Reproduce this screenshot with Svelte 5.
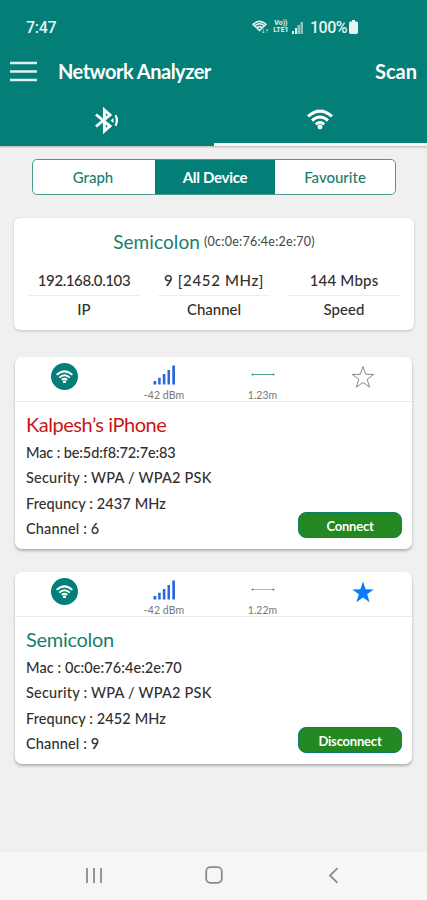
<script>
  const stats = [
    { value: '192.168.0.103', label: 'IP', spacing: -0.4 },
    { value: '9 [2452 MHz]', label: 'Channel', spacing: 0.65 },
    { value: '144 Mbps', label: 'Speed', spacing: 0.2 }
  ];

  const devices = [
    {
      name: 'Kalpesh\u2019s iPhone', connected: false, distance: '1.23m', action: 'Connect',
      rows: [
        { text: 'Mac : be:5d:f8:72:7e:83', spacing: -0.12 },
        { text: 'Security : WPA / WPA2 PSK', spacing: 0.21 },
        { text: 'Frequncy : 2437 MHz', spacing: 0.1 },
        { text: 'Channel : 6', spacing: 0.15 }
      ]
    },
    {
      name: 'Semicolon', connected: true, distance: '1.22m', action: 'Disconnect',
      rows: [
        { text: 'Mac : 0c:0e:76:4e:2e:70', spacing: 0.08 },
        { text: 'Security : WPA / WPA2 PSK', spacing: 0.21 },
        { text: 'Frequncy : 2452 MHz', spacing: 0.1 },
        { text: 'Channel : 9', spacing: 0.15 }
      ]
    }
  ];
</script>

{#snippet wifi(size)}
  <svg width={size} height={size * 0.8} viewBox="0 0 25 20" fill="none" stroke="currentColor" stroke-width="2.9">
    <path d="M1 7.2Q12.5-3.2 24 7.2M4.8 11.2Q12.5 4.2 20.2 11.2M8.5 14.7Q12.5 11.2 16.5 14.7" />
    <circle cx="12.5" cy="17.4" r="2.4" fill="currentColor" stroke="none" />
  </svg>
{/snippet}

<div class="screen">
  <header>
    <div class="status">
      <span class="clock">7:47</span>
      <div class="status-icons">
        <svg width="17" height="15" viewBox="0 0 17 15" fill="none" stroke="currentColor" stroke-width="1.5">
          <path d="M1 4.3Q7.5-1.5 14 4.3L7.5 10.5ZM3 5.6Q7.5 2 12 5.6M5.2 7.6Q7.5 5.6 9.8 7.6" />
          <path d="M11.5 9v4M10 11.5l1.5 1.5 1-1.2M15 13V9.2M14 10.5l1-1.3 1 1.3" stroke-width=".8" opacity=".6" />
        </svg>
        <div class="volte"><span>Vo))</span><span>LTE1</span></div>
        <svg width="12" height="13" viewBox="0 0 12 13" fill="currentColor">
          <path d="M0 10h2v3H0zM3 7h2v6H3z" />
          <path d="M5.5 4H8v9H5.5zM8.5 1H11v12H8.5z" opacity=".6" />
        </svg>
        <span class="percent">100%</span>
        <svg width="9" height="14" viewBox="0 0 9 14" fill="currentColor">
          <path d="M3 0h3v1.5h1.5Q9 1.5 9 3v9.2Q9 14 7.5 14h-6Q0 14 0 12.2V3Q0 1.5 1.5 1.5H3z" />
        </svg>
      </div>
    </div>
    <div class="bar">
      <svg width="27" height="21" viewBox="0 0 27 21" stroke="currentColor" stroke-width="2.3">
        <path d="M0 2h27M0 10.5h27M0 19h27" />
      </svg>
      <h1>Network Analyzer</h1>
      <span class="scan">Scan</span>
    </div>
    <div class="radios">
      <div class="radio">
        <svg width="24" height="27" viewBox="0 0 24 27" fill="none" stroke="currentColor" stroke-width="2.9">
          <path d="M1 7.5l14 11.6-5.6 4.9V3L15 7.9 1 19.5" />
          <path d="M15.5 13.5l3-2.4v4.8z" fill="currentColor" stroke="none" />
          <path d="M20.5 8.2q2.8 5.2 0 10.6" stroke-width="2.3" />
        </svg>
      </div>
      <div class="radio active">{@render wifi(26)}</div>
    </div>
  </header>

  <main>
    <div class="tabs">
      <span class="graph">Graph</span>
      <span class="selected">All Device</span>
      <span class="fav">Favourite</span>
    </div>

    <section class="summary">
      <div class="network"><span class="ssid">Semicolon</span><span class="mac">(0c:0e:76:4e:2e:70)</span></div>
      <div class="stats">
        {#each stats as stat}
          <div class="stat">
            <div class="value" style="letter-spacing: {stat.spacing}px">{stat.value}</div>
            <div class="label">{stat.label}</div>
          </div>
        {/each}
      </div>
    </section>

    {#each devices as device}
      <section class="device" class:connected={device.connected}>
        <div class="metrics">
          <div class="metric"><div class="badge">{@render wifi(17)}</div></div>
          <div class="metric">
            <svg width="24" height="20" viewBox="0 0 24 20" fill="#2867dc">
              <path d="M1.5 16h2.8v3.5H1.5zM6.2 12.8h2.5v6.7H6.2zM10.8 9h2.6v10.5h-2.6zM15.5 5h2.5v14.5h-2.5zM20.3.5h2.7v19h-2.7z" />
            </svg>
            <span class="dbm">-42 dBm</span>
          </div>
          <div class="metric">
            <svg width="24" height="20" viewBox="0 0 24 20" stroke="#36917f" fill="#36917f">
              <path d="M1 9.5h22" stroke-width="1" opacity={device.connected ? 0.5 : 0.85} />
              <circle cx="1.5" cy="9.5" r="1" stroke="none" /><circle cx="22.5" cy="9.5" r="1" stroke="none" />
            </svg>
            <span class="distance">{device.distance}</span>
          </div>
          <div class="metric favourite">
            <svg class="star" width="24" height="24" viewBox="0 0 24 24">
              <path d="M12 1.5l2.6 7.8 8.2.1-6.6 4.9 2.4 7.9-6.6-4.8-6.6 4.8 2.4-7.9L1.2 9.4l8.2-.1z" />
            </svg>
          </div>
        </div>
        <div class="details">
          <div>
            <h2>{device.name}</h2>
            {#each device.rows as row}<p style="letter-spacing: {row.spacing}px">{row.text}</p>{/each}
          </div>
          <button>{device.action}</button>
        </div>
      </section>
    {/each}
  </main>

  <nav>
    <div><svg width="18" height="17" viewBox="0 0 18 17" stroke="#8b8b8b" stroke-width="1.8"><path d="M2 1v15M9 1v15M16 1v15" /></svg></div>
    <div><svg width="18" height="18" viewBox="0 0 18 18" fill="none" stroke="#8b8b8b" stroke-width="1.8"><rect x="1.2" y="1.2" width="15.6" height="15.6" rx="4.2" /></svg></div>
    <div><svg width="11" height="17" viewBox="0 0 11 17" fill="none" stroke="#8b8b8b" stroke-width="1.8"><path d="M9.5 1.2L2 8.5l7.5 7.3" /></svg></div>
  </nav>
</div>

<style>
  :global(body) { margin: 0; }
  * { box-sizing: border-box; }
  .screen {
    width: 427px; height: 900px; overflow: hidden;
    display: flex; flex-direction: column;
    background: #f0f0f1; color: #303030;
    font-family: Lato, "Open Sans", sans-serif; white-space: nowrap;
  }
  svg { display: block; flex: none; }
  header { height: 146px; flex: none; display: flex; flex-direction: column; background: #037f77; color: #fff; box-shadow: 0 1px 2px #0004; }
  .status { height: 54px; display: flex; justify-content: space-between; padding: 0 69px 0 26px; align-items: center; font-family: Roboto, sans-serif; color: #e8f4f2; }
  .clock { font-size: 16px; font-weight: 500; letter-spacing: -.3px; }
  .status-icons { display: flex; align-items: center; }
  .volte { display: flex; flex-direction: column; width: 16px; margin: 0 3px 0 4px; font: bold 7px/7px Roboto, sans-serif; align-items: center; }
  .percent { font-size: 16px; font-weight: 500; margin: 0 2px 0 6px; letter-spacing: -.5px; }
  .bar { height: 34px; display: flex; align-items: center; padding: 0 10px; }
  .bar svg { color: #e0f1ee; }
  h1 { margin: 0 auto 0 21px; font-size: 20px; line-height: 34px; font-weight: 700; letter-spacing: -.5px; }
  .scan { font-size: 20px; font-weight: 700; letter-spacing: 0; }
  .radios { flex: 1; display: flex; }
  .radio { flex: 1; display: flex; justify-content: center; align-items: center; padding-top: 8px; border-bottom: 0 solid #f8f8f8; }
  .radio:first-child { padding-top: 6px; }
  .radio.active { border-bottom-width: 3px; }

  main { flex: 1; padding: 13px 14px 0; }
  .tabs { width: 364px; height: 36px; margin: 0 auto 23px 18px; display: flex; border: 1px solid #4d9b8e; border-radius: 5px; background: #fff; overflow: hidden; color: #197e70; font-size: 15px; font-weight: 500; }
  .tabs span { flex: 1; display: flex; align-items: center; justify-content: center; }
  .tabs .selected { background: #037f77; color: #fff; font-weight: 700; letter-spacing: -.3px; }
  .tabs .graph { padding-right: 2px; }

  .summary { width: 400px; height: 112px; padding: 9px 0 0; background: #fff; border-radius: 6px; box-shadow: 0 1px 3px #0003; }
  .network { height: 28px; display: flex; align-items: center; justify-content: center; gap: 4px; }
  .ssid { color: #197e70; font-size: 19px; letter-spacing: .1px; }
  .mac { font-size: 12.5px; color: #444; letter-spacing: .25px; }
  .stats { display: flex; justify-content: space-between; padding: 11px 14px 0; }
  .stat { width: 112px; text-align: center; font-size: 15px; font-weight: 500; }
  .value { height: 30px; line-height: 29px; border-bottom: 1px solid #ededed; }
  .label { height: 28px; line-height: 27px; }

  .device { width: 397px; height: 192px; margin: 27px 0 0 1px; background: #fff; border-radius: 7px; box-shadow: 0 2px 3px #0004; }
  .device + .device { margin-top: 23px; }
  .metrics { height: 45px; display: flex; border-bottom: 1px solid #ebebeb; }
  .metric { flex: 1; display: flex; flex-direction: column; align-items: center; padding-top: 8px; color: #777; font-size: 10.5px; line-height: 20px; }
  .dbm { letter-spacing: .1px; padding-left: 1px; }
  .favourite { padding-left: 1px; }
  .badge { width: 27px; height: 27px; margin-top: -2px; border-radius: 50%; background: #037f77; color: #fff; display: flex; align-items: center; justify-content: center; }
  .star { fill: none; stroke: #888; stroke-width: 1; }
  .connected .star { fill: #087cff; stroke: none; }
  .details { display: flex; justify-content: space-between; padding: 7px 10px 0 11px; height: 146px; }
  h2 { margin: 0; height: 31px; font-size: 20px; font-weight: 400; line-height: 31px; letter-spacing: -.45px; color: #ca1415; }
  .connected h2 { color: #197e70; letter-spacing: -.3px; }
  p { margin: 0; font-size: 14.5px; font-weight: 500; line-height: 25.3px; }
  button { align-self: flex-end; width: 104px; height: 26px; margin-bottom: 10px; padding: 1px 0 0; border: 1px solid #087f6d; border-radius: 8px; background: #238722; color: #fff; font: 700 13px Lato, sans-serif; letter-spacing: -.2px; }
  nav { height: 48px; flex: none; background: #f6f6f6; display: flex; padding: 0 34px 2px; align-items: center; }
  nav div { flex: 1; display: flex; justify-content: center; }
</style>
